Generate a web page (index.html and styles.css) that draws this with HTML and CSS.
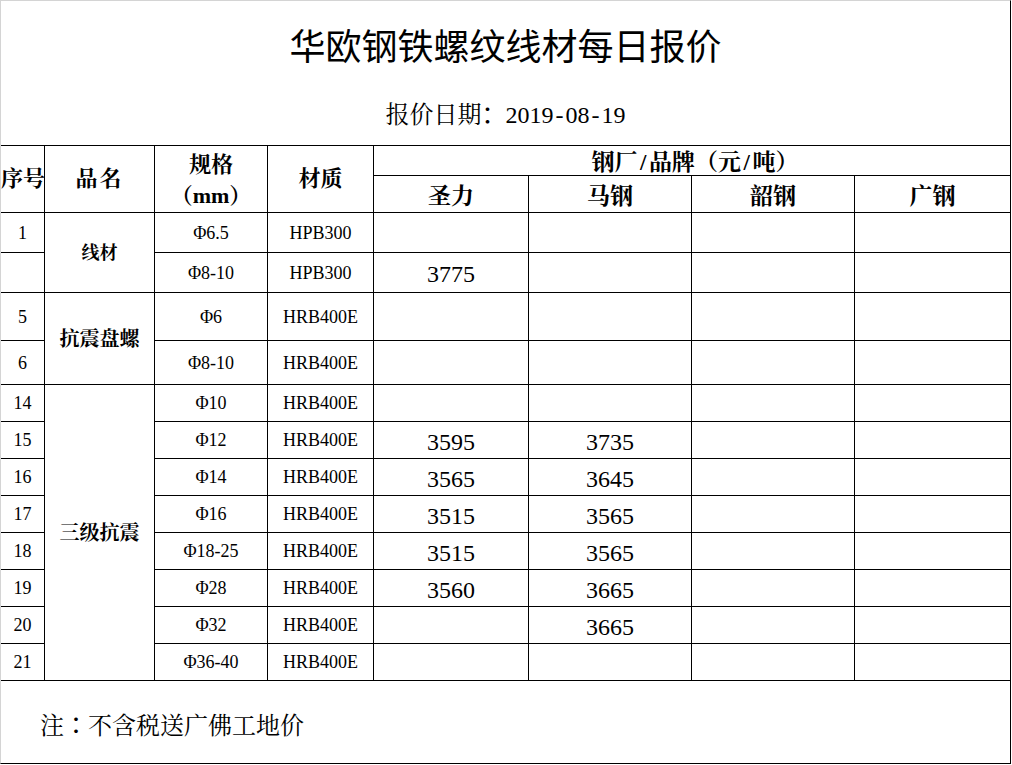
FILE: index.html
```
<!DOCTYPE html>
<html lang="zh-CN">
<head>
<meta charset="utf-8">
<title>华欧钢铁螺纹线材每日报价</title>
<link rel="stylesheet" href="styles.css">
</head>
<body>
<div class="sheet">
  <div class="head">
    <div class="title">华欧钢铁螺纹线材每日报价</div>
    <div class="date">报价日期<span class="colon">：</span>2019<span class="hy">-</span>08<span class="hy">-</span>19</div>
  </div>
  <div class="grid">
    <div class="c th h-no">序号</div>
    <div class="c th h-name">品名</div>
    <div class="c th h-spec"><span>规格</span><span>（mm）</span></div>
    <div class="c th h-mat">材质</div>
    <div class="c th h-brand">钢厂<span class="sl">/</span>品牌（元<span class="sl">/</span>吨）</div>
    <div class="c th h-sub">圣力</div>
    <div class="c th h-sub">马钢</div>
    <div class="c th h-sub">韶钢</div>
    <div class="c th h-sub last">广钢</div>

    <div class="c name g1">线材</div>
    <div class="c name g2">抗震盘螺</div>
    <div class="c name g3">三级抗震</div>

    <div class="c">1</div><div class="c">Φ6.5</div><div class="c">HPB300</div><div class="c p"></div><div class="c p"></div><div class="c p"></div><div class="c p last"></div>
    <div class="c"></div><div class="c">Φ8-10</div><div class="c">HPB300</div><div class="c p">3775</div><div class="c p"></div><div class="c p"></div><div class="c p last"></div>
    <div class="c">5</div><div class="c">Φ6</div><div class="c">HRB400E</div><div class="c p"></div><div class="c p"></div><div class="c p"></div><div class="c p last"></div>
    <div class="c">6</div><div class="c">Φ8-10</div><div class="c">HRB400E</div><div class="c p"></div><div class="c p"></div><div class="c p"></div><div class="c p last"></div>
    <div class="c">14</div><div class="c">Φ10</div><div class="c">HRB400E</div><div class="c p"></div><div class="c p"></div><div class="c p"></div><div class="c p last"></div>
    <div class="c">15</div><div class="c">Φ12</div><div class="c">HRB400E</div><div class="c p">3595</div><div class="c p">3735</div><div class="c p"></div><div class="c p last"></div>
    <div class="c">16</div><div class="c">Φ14</div><div class="c">HRB400E</div><div class="c p">3565</div><div class="c p">3645</div><div class="c p"></div><div class="c p last"></div>
    <div class="c">17</div><div class="c">Φ16</div><div class="c">HRB400E</div><div class="c p">3515</div><div class="c p">3565</div><div class="c p"></div><div class="c p last"></div>
    <div class="c">18</div><div class="c">Φ18-25</div><div class="c">HRB400E</div><div class="c p">3515</div><div class="c p">3565</div><div class="c p"></div><div class="c p last"></div>
    <div class="c">19</div><div class="c">Φ28</div><div class="c">HRB400E</div><div class="c p">3560</div><div class="c p">3665</div><div class="c p"></div><div class="c p last"></div>
    <div class="c">20</div><div class="c">Φ32</div><div class="c">HRB400E</div><div class="c p"></div><div class="c p">3665</div><div class="c p"></div><div class="c p last"></div>
    <div class="c">21</div><div class="c">Φ36-40</div><div class="c">HRB400E</div><div class="c p"></div><div class="c p"></div><div class="c p"></div><div class="c p last"></div>
  </div>
  <div class="foot">注<span class="colon">：</span>不含税送广佛工地价</div>
</div>
</body>
</html>
```

FILE: styles.css
```
* {
  box-sizing: border-box;
}

html,
body {
  margin: 0;
  padding: 0;
  background: #ffffff;
}

.sheet {
  width: 1011px;
  height: 764px;
  border-top: 1px solid #d4d4d4;
  border-left: 1px solid #d4d4d4;
  border-right: 1px solid #000000;
  border-bottom: 1px solid #000000;
  display: flex;
  flex-direction: column;
  font-family: "Liberation Serif", "Noto Serif CJK SC", "Noto Sans CJK SC", serif;
  color: #000000;
}

.head {
  height: 144px;
  display: flex;
  flex-direction: column;
  align-items: center;
  padding-top: 25px;
}

.title {
  font-family: "Noto Sans CJK SC", sans-serif;
  font-size: 36px;
  line-height: 36px;
}

.date {
  margin-top: 39px;
  font-size: 24px;
  line-height: 24px;
}

.colon {
  font-family: "Noto Sans CJK TC", "Noto Sans CJK SC", sans-serif;
}

.hy {
  display: inline-block;
  width: 0.5em;
  text-align: center;
}

.sl {
  display: inline-block;
  width: 0.5em;
  text-align: center;
}

.grid {
  display: grid;
  grid-template-columns: 44px 110px 113px 106px 155px 163px 163px 156px;
  grid-template-rows: 30px 37px 40px 40px 48px 44px repeat(8, 37px);
  border-top: 1px solid #000000;
  margin-right: -1px;
}

.c {
  border-right: 1px solid #000000;
  border-bottom: 1px solid #000000;
  display: flex;
  align-items: center;
  justify-content: center;
  font-size: 18px;
  line-height: 1;
  white-space: nowrap;
}

.th {
  font-size: 22px;
  font-weight: bold;
}

.h-no {
  grid-column: 1;
  grid-row: 1 / 3;
  justify-content: flex-start;
}

.h-name {
  grid-column: 2;
  grid-row: 1 / 3;
  letter-spacing: 2px;
}

.h-spec {
  grid-column: 3;
  grid-row: 1 / 3;
  flex-direction: column;
  line-height: 31px;
  padding-top: 2px;
}

.h-mat {
  grid-column: 4;
  grid-row: 1 / 3;
}

.h-brand {
  grid-column: 5 / 9;
  grid-row: 1;
  padding-top: 3px;
  font-size: 23px;
  padding-left: 6px;
}

.h-sub {
  grid-row: 2;
  padding-top: 4px;
  font-size: 23px;
}

.name {
  grid-column: 2;
  font-size: 20px;
  font-weight: bold;
}

.g1 {
  grid-row: 3 / 5;
  font-size: 18px;
}

.g2 {
  grid-row: 5 / 7;
}

.g3 {
  grid-row: 7 / 15;
}

.p {
  font-size: 24px;
  padding-top: 3px;
}

.foot {
  flex: 1;
  display: flex;
  align-items: center;
  padding-left: 39px;
  padding-top: 2px;
  font-size: 24px;
}
```
